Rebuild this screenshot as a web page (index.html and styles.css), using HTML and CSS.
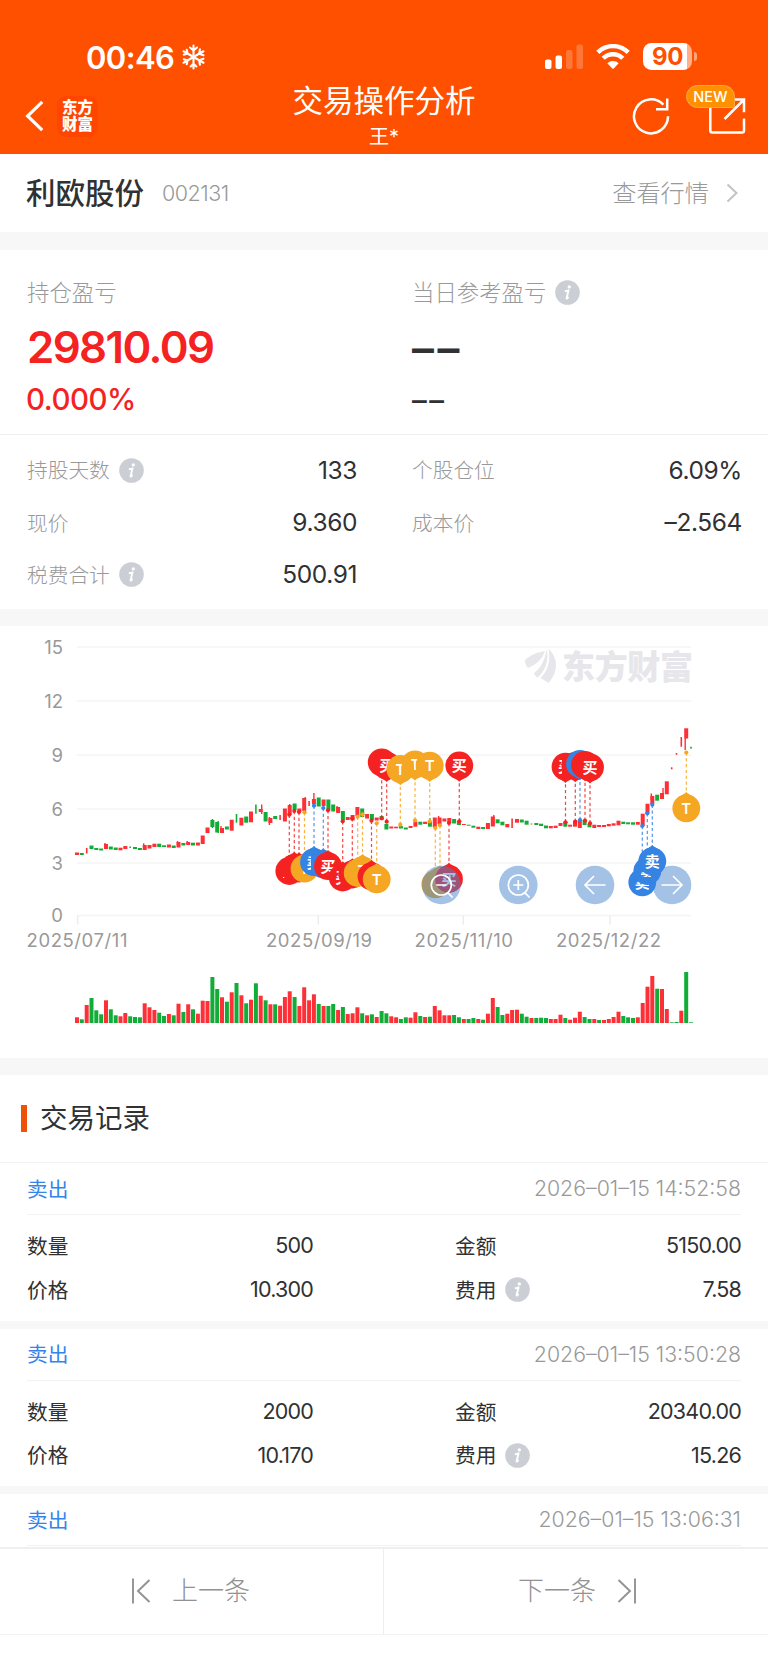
FILE: index.html
```html
<!DOCTYPE html>
<html lang="zh-CN">
<head>
<meta charset="utf-8">
<title>交易操作分析</title>
<link rel="stylesheet" href="styles.css">
</head>
<body>
<svg class="defs" width="0" height="0">
  <symbol id="info" viewBox="0 0 25 25">
    <circle cx="12.5" cy="12.5" r="12.3" fill="#cbced4"/>
    <circle cx="14.3" cy="6.9" r="1.7" fill="#fff"/>
    <path d="M10.6 11.2c1.200-.2 2-.5 3-.9l-2 7.700c-.2.9.5.6 1.500-.4" fill="none" stroke="#fff" stroke-width="1.900" stroke-linejoin="round" stroke-linecap="round"/>
  </symbol>
</svg>
<header class="header">
  <div class="status">
    <div class="clock"><span class="time">00:46</span>
      <svg width="25" height="26" viewBox="0 0 25 26" fill="none" stroke="#fff" stroke-width="2.1" stroke-linecap="round" stroke-linejoin="round">
        <g id="arm"><path d="M12.5 13V1.5M9 3.5l3.5 3 3.5-3M9.6 22.5l2.9-2.7 2.9 2.7M12.5 13v11.5"/></g>
        <use href="#arm" transform="rotate(60 12.5 13)"/><use href="#arm" transform="rotate(120 12.5 13)"/>
      </svg>
    </div>
    <div class="signals">
      <svg width="39" height="26" viewBox="0 0 39 26" fill="#fff"><rect x="0" y="15.500" width="6.500" height="9.500" rx="2"/><rect x="10.500" y="11.500" width="6.500" height="13.500" rx="2"/><g opacity=".22"><rect x="21" y="6" width="6.500" height="19" rx="2"/><rect x="31.500" y="0.500" width="6.500" height="24.500" rx="2"/></g></svg>
      <svg class="wifi" width="34" height="26" viewBox="0 0 34 26"><g fill="none" stroke="#fff" stroke-width="4.400"><path d="M1.800 8.400a21.500 21.500 0 0 1 30.400 0"/><path d="M7.200 14.300a13.900 13.900 0 0 1 19.600 0"/></g><path d="M11.300 19.200a8.300 8.300 0 0 1 11.400 0l-5 5.200q-.7.700-1.400 0z" fill="#fff"/></svg>
      <div class="battery"><span class="charge">90</span></div>
    </div>
  </div>
  <nav class="nav">
    <div class="nav-left">
      <svg width="19" height="32" viewBox="0 0 19 32" fill="none" stroke="#fff" stroke-width="3.200"><path d="M17.200 1.800L2.600 16l14.600 14.200"/></svg>
      <div class="brand"><span>东方</span><span>财富</span></div>
    </div>
    <div class="title"><h1>交易操作分析</h1><p>王*</p></div>
    <div class="nav-right">
      <svg width="38" height="38" viewBox="0 0 38 38" fill="none" stroke="#fff" stroke-width="2.500"><path d="M36 19.200a17 17 0 1 1-4.600-11.500"/><path d="M35.200 1.500v10.800H24"/></svg>
      <div class="share">
        <svg width="38" height="38" viewBox="0 0 38 38" fill="none" stroke="#fff" stroke-width="2.500"><path d="M18 2.800H4.500Q2.300 2.800 2.300 5v28.500q0 2 2 2H34q2 0 2-2V21.500"/><path d="M25 2.500h11v12.800M36 2.500L16.500 22"/></svg>
        <span class="badge">NEW</span>
      </div>
    </div>
  </nav>
</header>
<main>
  <section class="stock"><h2>利欧股份</h2><span class="code">002131</span><a class="quote">查看行情</a>
    <svg width="13" height="20" viewBox="0 0 13 20" fill="none" stroke="#c3c3c6" stroke-width="2"><path d="M1.500 1.500L10.500 10l-9 8.500"/></svg>
  </section>
  <section class="profit">
    <div><div class="caption"><span>持仓盈亏</span></div><div class="amount red">29810.09</div><div class="rate red">0.000%</div></div>
    <div><div class="caption"><span>当日参考盈亏</span><svg class="info"><use href="#info"/></svg></div><div class="amount dash">––</div><div class="rate dash">––</div></div>
  </section>
  <section class="stats">
    <div class="stat"><span>持股天数</span><svg class="info"><use href="#info"/></svg><b>133</b></div>
    <div class="stat"><span>个股仓位</span><b>6.09%</b></div>
    <div class="stat"><span>现价</span><b>9.360</b></div>
    <div class="stat"><span>成本价</span><b>–2.564</b></div>
    <div class="stat"><span>税费合计</span><svg class="info"><use href="#info"/></svg><b>500.91</b></div>
  </section>
  <section class="chart"><svg id="chart" width="768" height="432" viewBox="0 626 768 432"></svg></section>
  <section class="heading"><i></i><h3>交易记录</h3></section>
  <article class="record">
    <div class="record-head"><span class="side">卖出</span><time>2026–01–15 14:52:58</time></div>
    <div class="record-body">
      <div class="cell"><span>数量</span><b>500</b></div><div class="cell"><span>金额</span><b>5150.00</b></div>
      <div class="cell"><span>价格</span><b>10.300</b></div><div class="cell"><span>费用</span><svg class="info"><use href="#info"/></svg><b>7.58</b></div>
    </div>
  </article>
  <article class="record">
    <div class="record-head"><span class="side">卖出</span><time>2026–01–15 13:50:28</time></div>
    <div class="record-body">
      <div class="cell"><span>数量</span><b>2000</b></div><div class="cell"><span>金额</span><b>20340.00</b></div>
      <div class="cell"><span>价格</span><b>10.170</b></div><div class="cell"><span>费用</span><svg class="info"><use href="#info"/></svg><b>15.26</b></div>
    </div>
  </article>
  <article class="record last">
    <div class="record-head"><span class="side">卖出</span><time>2026–01–15 13:06:31</time></div>
  </article>
</main>
<footer class="pager">
  <a class="prev"><svg width="20" height="26" viewBox="0 0 20 26" fill="none" stroke="#929292" stroke-width="1.900"><path d="M2 .5v25M18.500 2L7 13l11.500 11"/></svg><span>上一条</span></a>
  <a class="next"><span>下一条</span><svg width="20" height="26" viewBox="0 0 20 26" fill="none" stroke="#929292" stroke-width="1.900"><path d="M18 .5v25M1.500 2L13 13 1.500 24"/></svg></a>
</footer>
<script src="chart.js"></script>
</body>
</html>
```

FILE: styles.css
```css
* { box-sizing: border-box; margin: 0; padding: 0; }
body { width: 768px; height: 1669px; background: #fff; color: #303133; font-family: Inter, "Noto Sans CJK SC", sans-serif; overflow: hidden; }
svg { display: block; flex: none; }
.defs { position: absolute; }
b, h1, h2, h3 { font-weight: 400; }
.red { color: #f52222; }

.header { height: 154px; background: #ff5000; color: #fff; }
.status { height: 75px; padding: 39px 76px 0 86px; display: flex; justify-content: space-between; }
.clock { display: flex; align-items: center; height: 36px; gap: 7px; }
.time { font-size: 31px; font-weight: 600; letter-spacing: -.6px; }
.signals { display: flex; height: 35px; align-items: center; }
.wifi { margin: 0 13px 0 12px; }
.battery { position: relative; width: 49px; height: 27px; border-radius: 8.500px; background: linear-gradient(90deg, #fff 44.500px, #ffb08a 44.500px); display: flex; align-items: center; justify-content: center; }
.battery::after { content: ""; position: absolute; left: 50.500px; top: 9px; width: 3.500px; height: 9px; border-radius: 0 4px 4px 0; background: #ffa57b; }
.charge { color: #ff5000; font-size: 24px; font-weight: 700; line-height: 27px; letter-spacing: -.4px; }
.nav { height: 79px; padding: 0 22px; display: grid; grid-template-columns: 1fr auto 1fr; align-items: center; }
.nav-left { display: flex; align-items: center; gap: 13px; padding: 3px 0 0 3px; }
.brand { width: 41px; height: 41px; border-radius: 9px; background: #ff4600; display: flex; flex-direction: column; align-items: center; justify-content: center; font-size: 15.500px; line-height: 17px; font-weight: 900; padding-bottom: 1px; }
.title { text-align: center; padding-top: 2px; }
.title h1 { font-size: 30.500px; line-height: 42px; }
.title p { font-size: 20px; line-height: 30px; }
.nav-right { display: flex; justify-content: flex-end; gap: 38px; padding-top: 2px; }
.share { position: relative; }
.badge { position: absolute; left: -22px; top: -12px; width: 49px; height: 23px; border-radius: 12px 12px 2px 12px; background: #ff9000; border: 1px solid #ffa74b; font-size: 14.500px; line-height: 22px; text-align: center; font-weight: 500; }

.stock { height: 78px; padding: 0 29px 0 26px; display: flex; align-items: center; }
.stock h2 { font-size: 29.500px; font-weight: 500; line-height: 40px; }
.code { margin-left: 18px; font-size: 21.500px; color: #999; letter-spacing: -.5px; font-weight: 300; }
.quote { margin: 0 17px 0 auto; padding-bottom: 4px; font-size: 24.200px; color: #999; font-weight: 300; }
.profit { height: 203px; border-top: 18px solid #f7f7f7; border-bottom: 1px solid #f0f0f0; padding: 24px 27px 0; display: grid; grid-template-columns: 330px 330px; column-gap: 55px; }
.caption { height: 36px; display: flex; align-items: center; font-size: 22.400px; color: #999; font-weight: 300; }
.caption span, .stat span, .cell span, .side { padding-bottom: 2px; }
.info { width: 25px; height: 25px; margin-left: 9px; }
.amount { height: 60px; line-height: 60px; margin-top: 8px; font-size: 43.800px; font-weight: 600; letter-spacing: -1.600px; }
.rate { height: 40px; line-height: 40px; margin: 1px 0 0 -1px; font-size: 29.500px; font-weight: 500; letter-spacing: -.5px; }
.amount.dash { color: #303133; letter-spacing: 3.600px; padding-top: 1px; }
.rate.dash { color: #303133; letter-spacing: 2.500px; padding-top: 1px; margin-left: 0; }
.stats { height: 191px; padding: 9px 27px; border-bottom: 17px solid #f7f7f7; display: grid; grid-template-columns: 330px 330px; grid-auto-rows: 52.400px; column-gap: 55px; }
.stat, .cell { display: flex; align-items: center; font-size: 20.700px; }
.stat { color: #999; font-weight: 300; }
.stat b { margin-left: auto; color: #303133; font-size: 24.500px; letter-spacing: -.4px; padding-bottom: 1px; }
.chart { height: 449px; border-bottom: 17px solid #f7f7f7; }
.heading { height: 88px; padding-left: 21px; display: flex; align-items: center; gap: 13px; border-bottom: 1px solid #f2f2f2; }
.heading i { width: 6px; height: 27px; background: #ee5208; }
.heading h3 { font-size: 27.500px; line-height: 40px; padding-bottom: 2px; }
.record { height: 165.700px; padding: 0 27px; border-bottom: 8.500px solid #f7f7f7; }
.record-head { height: 52px; display: flex; align-items: center; justify-content: space-between; border-bottom: 1px solid #f2f2f2; font-size: 20.700px; }
.side { color: #3484ec; }
.record time { color: #999; font-size: 21.300px; font-weight: 300; padding-bottom: 1px; }
.record-body { padding-top: 9px; display: grid; grid-template-columns: 286px 286px; grid-auto-rows: 43.700px; justify-content: space-between; }
.cell b { margin-left: auto; font-size: 21.500px; letter-spacing: -.8px; padding-bottom: 1px; }
.last { height: 52.500px; border: 0; }
.pager { height: 88px; border-top: 2px solid #efefef; border-bottom: 1px solid #f2f2f2; display: grid; grid-template-columns: 384px 384px; color: #929292; font-size: 26px; font-weight: 300; }
.pager a { display: flex; align-items: center; gap: 21px; padding-bottom: 1px; }
.pager span { padding-bottom: 5px; }
.pager .prev { padding-left: 131px; border-right: 1px solid #ededed; }
.pager .next { padding-left: 134px; }
```

FILE: chart.js
```js
const svg = document.getElementById('chart');
const RED = '#fd3038', GREEN = '#12ad38';
const PIN = { r: '#f52222', o: '#f5a623', b: '#3583e3' };
const X0 = 77, STEP = 614 / 127;
let out = '';

// Axes
[[15, 647], [12, 701], [9, 755], [6, 809], [3, 863], [0, 915.5]].forEach(([v, y]) => {
  out += `<path d="M77 ${y}H691" stroke="#f4f4f6" stroke-width="1.6"/><text x="63" y="${y + 6.5}" text-anchor="end" class="axis">${v}</text>`;
});
[77.7, 318.3, 463.3, 610].forEach(x => { out += `<path d="M${x} 915.5v9" stroke="#ececee" stroke-width="1.4"/>`; });
[['2025/07/11', 26.5, 101], ['2025/09/19', 266, 106], ['2025/11/10', 414.5, 98.500], ['2025/12/22', 556, 105]].forEach(([t, x, w]) => {
  out += `<text x="${x}" y="946.600" class="axis" textLength="${w}">${t}</text>`;
});

// Watermark
out += `<g fill="#e6e6eb"><path d="M525 660c5-5 13-8 20-9-2 6-7 13-17 17-2-2-3-5-3-8z"/><path d="M534 673c7-5 11-13 12.500-23.500 3 9-1 22-9 28-2-1-3-3-3.500-4.500z"/><path d="M548.500 649c9 8 11 22 0 34-3-2-6-4-8-5 8-8 10-18 8-29z"/></g>
<text x="562" y="679" fill="#e6e6eb" font-size="33" font-weight="900" textLength="131" font-family="Noto Sans CJK SC">东方财富</text>`;

// Candles: colour, top, bottom; a trailing "t" marks a thin body
const candles = `r852.5-855 g853-855 r848-853.5t g845.500-849 g848-850 g848.500-850.500 r844-849 g846.500-849.500 g847.500-850 r847.700-850.300 r846-849 g846.500-848t g847-849 g848-850 r845-850 r845-848.500 r843.700-847 g843.700-847 g845.300-847 r844.500-847.500 g845.500-848 r842-847.500 g843-845.500 r842-845 g842.700-845.500 r842.500-845.500 r835.500-844 r827.500-833 g820-827 g822-832.500 r828-833 g826.500-829.500 r819.700-830.700 g814-822.700t r817.700-825.500 g816.500-822.700 r811.500-822.300 g804.500-813.700t r809-812 g812-821.500 r818-823 g816-819 r815-820t r808.500-821.500 r805-815 g803.500-810 r808.500-812 r798-811 r801-806t r799-804 g797.500-806.500 r799.500-806 g799.500-810 g804.500-811.500 r807-813 g811-820.500 r817-820 r815-820.500 r807-816 g808.500-817 r814-818.500 g814-820 r817.500-820.500 g816-820 g824-829.500 r826.500-828.500 r826.700-828.300 g826-828.500 g827.500-829.500 r826-828 r821.700-826.700 g821.700-824.700 r821.700-824 g821.300-826.700 r817.500-827.300 r817.500-824 r818.500-821.500 r818-823 g819-823.500 g820.700-825 r824-825 g824.700-825.700 g825.700-827.700 r826.700-829 g827-829 r823-829 r816.500-826.500 g819.300-823.300 g821.700-825.300 r824-827.300 r818.500-828t r819-822.700 g819.500-822.500 g820.700-824.700 r823.500-824.500t g823-825 g823.700-826 g825.500-828.300 r826-828.300 r825.700-828 r823-826 g821.700-826.700 r824.700-826.700 r820.700-826.700 r820-828 g820-825 g824-827.300 r824.700-828 r825-827 r825-827 r824-826.300 r823.300-825.700 r820.700-825.300 g821.700-824 g822.300-824.300 g822.300-824.700 r822-824.700 r813.700-826 r803.700-813.300 r796-804 g794.700-800.700 r793-799 r781.300-794.300 r767.300-769.300t r753-754.700t r737-746.700t r728.300-738.500 g746.700-748.700t`.split(' ');
candles.forEach((c, i) => {
  const [, k, a, z, t] = c.match(/^([rg])([\d.]+)-([\d.]+)(t?)$/);
  const w = t ? 1.6 : 4, x = X0 + i * STEP - w / 2;
  out += `<rect x="${x.toFixed(1)}" y="${a}" width="${w}" height="${(z - a).toFixed(1)}" fill="${k === 'r' ? RED : GREEN}"/>`;
});
// Wicks: index, colour, offset, top, bottom
[[6,'r',-1,843,846],[14,'r',-1,843.3,847],[21,'r',-1,841,845],[23,'r',-1,841,844],[28,'g',0,819,828],[29,'g',1,821,833],[30,'r',-1,826,830],[38,'r',1,804.5,814],[40,'r',-1,817,825],[44,'r',0,804,816],[47,'r',1,797,808],[49,'r',0,793,805],[54,'r',-1,806,812],[73,'g',0,818,826],[75,'r',-1,816,825],[86,'r',1,815,826],[119,'r',-1,793.5,800],[121,'r',1,788,798],[126,'r',-1,738,750]]
  .forEach(([i, k, o, a, z]) => { out += `<rect x="${(X0 + i * STEP + o - .7).toFixed(1)}" y="${a}" width="1.4" height="${z - a}" fill="${k === 'r' ? RED : GREEN}"/>`; });

// Volume, in thirds of a pixel
const volume = 'r17 g11 r54 g75 g38 g26 r68 g41 g23 r20 r30 g20 g18 g17 r59 r47 r39 g31 g21 r27 g23 r58 g33 r56 g41 r28 r67 r66 g138 g102 r77 g64 r92 g120 r83 g59 r70 g119 r82 g68 r56 g56 r52 r78 r95 g78 r51 r107 r68 r86 g57 r51 g51 g57 r39 g48 r27 r29 r47 g29 r23 g26 r18 g36 g29 r20 r17 g12 g17 r16 r32 g21 r18 g19 r51 r38 r23 r23 g24 g17 r12 g12 g15 r12 g10 r28 r75 g48 g24 r28 r39 r40 g28 g19 r15 g15 g16 g15 r12 r12 r25 g15 r10 r16 r34 g18 g12 r12 g9 r9 r12 r18 r34 g21 g17 g15 r17 r60 r109 r141 g103 r102 r42 g2 g3 r37 g153 g2'.split(' ');
volume.forEach((v, i) => {
  const h = v.slice(1) / 3;
  out += `<rect x="${(X0 + i * STEP - 2).toFixed(1)}" y="${(1023 - h).toFixed(1)}" width="4" height="${h.toFixed(1)}" fill="${v[0] === 'r' ? RED : GREEN}"/>`;
});

function button(x, icon) {
  out += `<g transform="translate(${x} 885)"><circle r="19.3" fill="#4886ce" opacity=".5"/><path d="${icon}" fill="none" stroke="#fff" stroke-width="1.700"/></g>`;
}
const LENS = 'M10 0a10 10 0 1 1-20 0 10 10 0 0 1 20 0M6.500 7.700L11.300 12.500';
button(518.3, LENS + 'M-5 0H5M0-5V5');
button(595, 'M10.500 0H-10M-1-9L-10 0-1 9');
button(672, 'M-10.500 0H10M1-9L10 0 1 9');

// Trade pins: colour, x, circle centre, price point, label, clip (x, y, w, h)
const pins = [
  ['r',289.3,871,814.7,'买',[283,875,2,3]],['r',294.3,868,811],['r',299,868.500,812],['o',304.500,868.700,812.300,'T',[303,869,2.500,5]],
  ['b',323.3,864.500,808],['b',314,862.200,805.700,'卖',[307,855,4,15]],['r',328,866.200,810.300,'买'],
  ['r',342.700,877.500,821.300,'买',[335,870,5.500,15]],['r',352.300,874.500,818.300],['o',357.700,873,816.700],['o',362.500,870.300,814.300,'T',[356,863,7,6]],
  ['r',371.500,876.300,820.700],['o',376.700,879.300,823.300,'T'],
  ['o',435.300,884.300,828],['o',440,881.500,825.300],['r',449,879,823,'买'],
  ['r',381.700,762.300,818.300],['r',386.700,765.700,821.700,'买'],
  ['o',415,764.300,820.300,'T',[411,756,6.300,16]],['o',429.700,765.700,821.300,'T'],['o',400.300,769,824.700,'T',[395.500,761,6.300,16]],
  ['r',459.300,765.500,821.300,'买'],
  ['r',565.500,766.700,822.300,'买',[558,758,4,16]],['r',575.300,766,821.700],['b',580,764,820],['r',585,765,820.700],['r',590,767.300,823.300,'买'],
  ['b',642.300,882.300,826,'卖',[630,881,19,12]],['b',647.300,871,813.300,'卖',[641,872,10,5]],['b',652.300,861.300,804.700,'卖'],
  ['o',686.300,808.300,752.500,'T']
];
pins.forEach(([k, x, y, p]) => {
  out += `<path d="M${x} ${p}V${y}" stroke="${PIN[k]}" stroke-width="1.200" stroke-dasharray="3.200 2.600" opacity=".85"/>`;
});
pins.forEach(([k, x, y, p, label, clip], n) => {
  const d = p > y ? 1 : -1;
  out += `<circle cx="${x}" cy="${p}" r="2.100" fill="${PIN[k]}"/><g fill="${PIN[k]}"><circle cx="${x}" cy="${y}" r="13.900"/><path d="M${x - 8} ${y + 11.2 * d}Q${x - 2} ${y + 14 * d} ${x} ${y + 16.2 * d}Q${x + 2} ${y + 14 * d} ${x + 8} ${y + 11.2 * d}z"/></g>`;
  if (!label) return;
  let c = '';
  if (clip) {
    out += `<clipPath id="c${n}"><rect x="${clip[0]}" y="${clip[1]}" width="${clip[2]}" height="${clip[3]}"/></clipPath>`;
    c = ` clip-path="url(#c${n})"`;
  }
  out += `<text x="${x}" y="${y + 5.600}" text-anchor="middle" class="pin"${c}>${label}</text>`;
});
button(441.300, LENS + 'M-5 0H5');

svg.innerHTML = `<style>.axis{font:400 18.500px Inter;fill:#999}.pin{font:600 15px Inter,"Noto Sans CJK SC";fill:#fff}</style>` + out;
```
